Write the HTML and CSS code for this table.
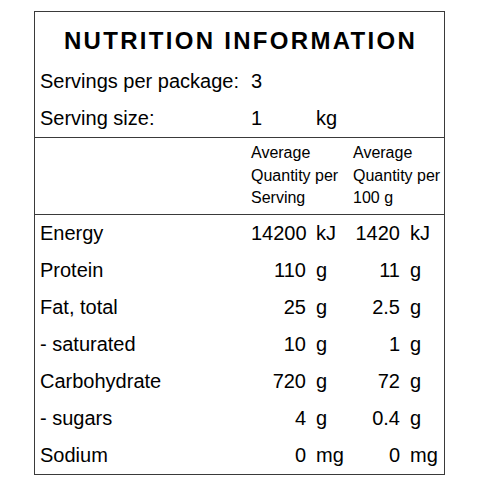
FILE: index.html
```html
<!DOCTYPE html>
<html>
<head>
<meta charset="utf-8">
<link rel="stylesheet" href="styles.css">
</head>
<body>
<div class="panel">
  <div class="intro">
    <h1 class="title">NUTRITION INFORMATION</h1>
    <div class="row">
      <span class="label">Servings per package:</span>
      <span class="left">3</span>
    </div>
    <div class="row">
      <span class="label">Serving size:</span>
      <span class="left">1</span>
      <span class="unit">kg</span>
    </div>
  </div>
  <div class="head row">
    <span class="label"></span>
    <span class="hcell hc1">Average<br>Quantity per<br>Serving</span>
    <span class="hcell hc2">Average<br>Quantity per<br>100 g</span>
  </div>
  <div class="data">
    <div class="row"><span class="label">Energy</span><span class="num">14200</span><span class="unit">kJ</span><span class="num">1420</span><span class="unit">kJ</span></div>
    <div class="row"><span class="label">Protein</span><span class="num">110</span><span class="unit">g</span><span class="num">11</span><span class="unit">g</span></div>
    <div class="row"><span class="label">Fat, total</span><span class="num">25</span><span class="unit">g</span><span class="num">2.5</span><span class="unit">g</span></div>
    <div class="row"><span class="label">- saturated</span><span class="num">10</span><span class="unit">g</span><span class="num">1</span><span class="unit">g</span></div>
    <div class="row"><span class="label">Carbohydrate</span><span class="num">720</span><span class="unit">g</span><span class="num">72</span><span class="unit">g</span></div>
    <div class="row"><span class="label">- sugars</span><span class="num">4</span><span class="unit">g</span><span class="num">0.4</span><span class="unit">g</span></div>
    <div class="row"><span class="label">Sodium</span><span class="num">0</span><span class="unit">mg</span><span class="num">0</span><span class="unit">mg</span></div>
  </div>
</div>
</body>
</html>
```
FILE: styles.css
```css
* { box-sizing: border-box; }
html, body { margin: 0; padding: 0; background: #fff; }
body {
  font-family: "Liberation Sans", Arial, sans-serif;
  color: #000;
}
.panel {
  width: 411px;
  margin: 11px 0 0 34px;
  border: 1px solid #3a3a3a;
}
.intro { border-bottom: 1px solid #3a3a3a; }
.title {
  margin: 0;
  padding: 15px 0 8px 2px;
  font-size: 24px;
  line-height: 28px;
  font-weight: bold;
  letter-spacing: 2.3px;
  text-align: center;
}
.row {
  display: grid;
  grid-template-columns: 211px 55px 47px 47px 44px;
  padding-left: 5px;
  font-size: 20px;
  line-height: 37px;
  height: 37px;
}
.left { text-align: left; }
.num { text-align: right; }
.unit { padding-left: 10px; white-space: nowrap; }
.head {
  height: 77px;
  border-bottom: 1px solid #3a3a3a;
  font-size: 16px;
  line-height: 22.5px;
  padding-top: 4px;
}
.hc1 { grid-column: 2 / 4; }
.hc2 { grid-column: 4 / 6; }
```
